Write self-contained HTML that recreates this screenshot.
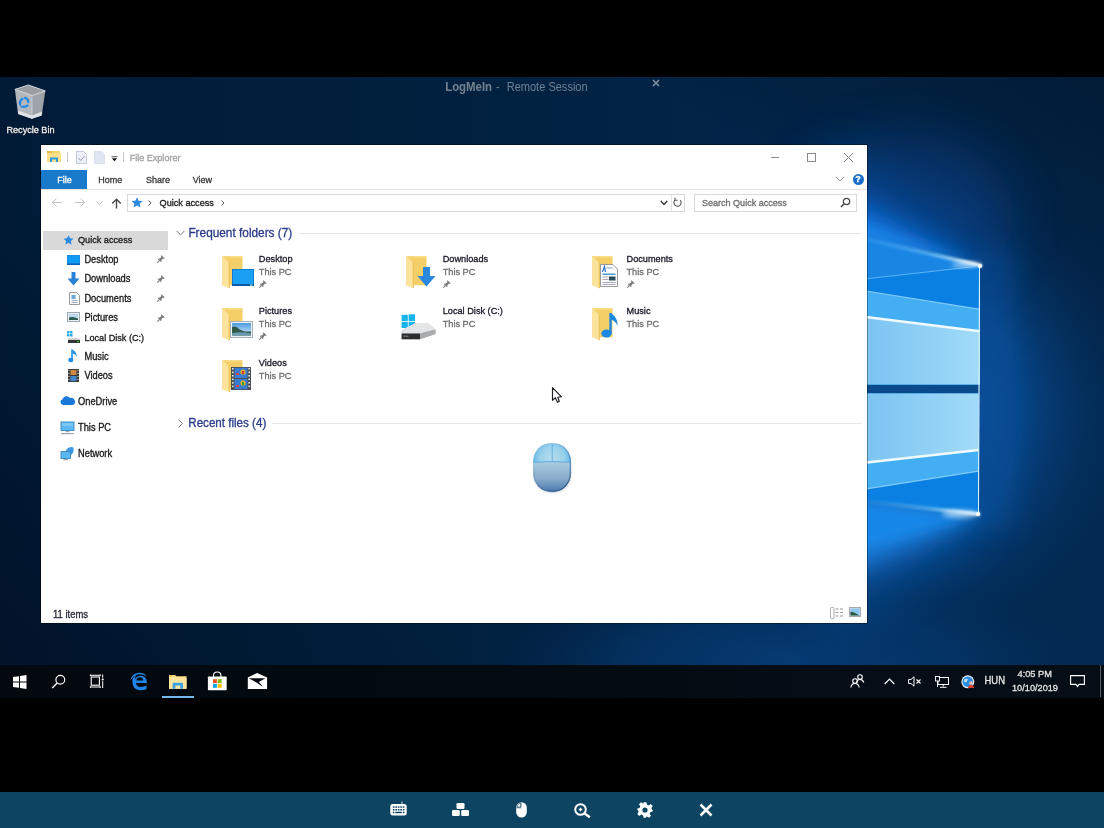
<!DOCTYPE html>
<html><head><meta charset="utf-8">
<style>
*{margin:0;padding:0;box-sizing:border-box}
html,body{width:1104px;height:828px;overflow:hidden;background:#000;font-family:"Liberation Sans",sans-serif}
.a{position:absolute;white-space:nowrap}
#desk{left:0;top:77px;width:1104px;height:588px;overflow:hidden}
#taskbar{left:0;top:665px;width:1104px;height:33px;background:linear-gradient(90deg,#03090e 0%,#030b10 45%,#050e17 80%,#050d15 100%)}
#lmi{left:0;top:792px;width:1104px;height:36px;background:#0d4461}
#win{left:41px;top:145px;width:826px;height:478px;background:#fff;overflow:hidden;box-shadow:0 0 0 1px rgba(0,0,0,0.35)}
.t{position:absolute;white-space:nowrap;line-height:1;-webkit-text-stroke:0.3px currentColor;transform:scaleY(1.08);transform-origin:0 84.65%}
</style></head><body>
<!-- DESKTOP -->
<div id="desk" class="a">
<svg width="1104" height="588" viewBox="0 77 1104 588">
<defs>
<linearGradient id="bg" x1="0" y1="0" x2="1104" y2="0" gradientUnits="userSpaceOnUse">
<stop offset="0" stop-color="#011b37"/>
<stop offset="0.4" stop-color="#01203f"/>
<stop offset="0.7" stop-color="#022549"/>
<stop offset="1" stop-color="#032a52"/>
</linearGradient>
<linearGradient id="dkBL" x1="0" y1="665" x2="250" y2="420" gradientUnits="userSpaceOnUse">
<stop offset="0" stop-color="#000814" stop-opacity="0.4"/>
<stop offset="1" stop-color="#000814" stop-opacity="0"/>
</linearGradient>
<linearGradient id="dkTR" x1="1104" y1="77" x2="940" y2="300" gradientUnits="userSpaceOnUse">
<stop offset="0" stop-color="#000814" stop-opacity="0.45"/>
<stop offset="1" stop-color="#000814" stop-opacity="0"/>
</linearGradient>
<radialGradient id="glow" cx="900" cy="400" r="1" gradientUnits="objectBoundingBox">
<stop offset="0" stop-color="#0a52a0" stop-opacity="1"/>
<stop offset="0.5" stop-color="#074384" stop-opacity="0.7"/>
<stop offset="1" stop-color="#04305e" stop-opacity="0"/>
</radialGradient>
<radialGradient id="glow2" cx="0.5" cy="0.5" r="0.5">
<stop offset="0" stop-color="#0b5cb0" stop-opacity="1"/>
<stop offset="0.55" stop-color="#084d98" stop-opacity="0.75"/>
<stop offset="1" stop-color="#04305e" stop-opacity="0"/>
</radialGradient>
<linearGradient id="beam" x1="867" y1="0" x2="982" y2="0" gradientUnits="userSpaceOnUse">
<stop offset="0" stop-color="#3aa0f0" stop-opacity="0.25"/>
<stop offset="0.55" stop-color="#7cc8f8" stop-opacity="0.55"/>
<stop offset="0.85" stop-color="#d8f0ff" stop-opacity="0.9"/>
<stop offset="1" stop-color="#ffffff" stop-opacity="1"/>
</linearGradient>
<linearGradient id="topL" x1="867" y1="0" x2="980" y2="0" gradientUnits="userSpaceOnUse">
<stop offset="0" stop-color="#7cc4f2"/>
<stop offset="1" stop-color="#a2dbf8"/>
</linearGradient>
<filter id="blur25" x="-100%" y="-100%" width="300%" height="300%"><feGaussianBlur stdDeviation="25"/></filter>
<filter id="blur12" x="-100%" y="-100%" width="300%" height="300%"><feGaussianBlur stdDeviation="12"/></filter>
<filter id="blur6" x="-50%" y="-50%" width="200%" height="200%"><feGaussianBlur stdDeviation="6"/></filter>
<filter id="blur3" x="-50%" y="-50%" width="200%" height="200%"><feGaussianBlur stdDeviation="2.5"/></filter>
<filter id="blur1" x="-10%" y="-50%" width="120%" height="200%"><feGaussianBlur stdDeviation="0.7"/></filter>
<filter id="blur15" x="-10%" y="-100%" width="120%" height="300%"><feGaussianBlur stdDeviation="1.3"/></filter>
</defs>
<rect x="0" y="77" width="1104" height="588" fill="url(#bg)"/>
<rect x="0" y="77" width="1104" height="588" fill="url(#dkBL)"/>
<rect x="0" y="77" width="1104" height="588" fill="url(#dkTR)"/>
<ellipse cx="790" cy="660" rx="300" ry="90" fill="url(#glow2)" opacity="0.4"/>
<ellipse cx="890" cy="410" rx="240" ry="250" fill="url(#glow2)"/>
<!-- glows -->
<ellipse cx="905" cy="215" rx="110" ry="80" fill="#0a4a98" opacity="0.45" filter="url(#blur25)"/>
<polygon points="830,150 982,264 830,245" fill="#0a5ec8" opacity="0.5" filter="url(#blur25)"/>
<polygon points="840,195 982,265 840,242" fill="#0c72dc" opacity="0.95" filter="url(#blur12)"/>
<polygon points="850,218 982,265 850,240" fill="#1a86ea" opacity="0.9" filter="url(#blur6)"/>
<polygon points="830,500 982,516 830,630" fill="#0f64c0" opacity="0.5" filter="url(#blur25)"/>
<polygon points="840,500 982,516 840,575" fill="#2088e8" opacity="0.85" filter="url(#blur12)"/>
<polygon points="850,500 982,516 850,550" fill="#1688ea" opacity="0.95" filter="url(#blur6)"/>
<rect x="975" y="250" width="40" height="280" fill="#0d58a8" opacity="0.35" filter="url(#blur12)"/>
<!-- dark gap -->
<rect x="860" y="384.6" width="121" height="8.8" fill="#0b4a8a"/>
<!-- top pane -->
<polygon points="860,236 980,266 860,280" fill="#1a86e4"/>
<polygon points="860,279.5 980,266 980,384.6 860,384.6" fill="#0a80e2"/>
<polygon points="860,290 980,309.3 980,384.6 860,384.6" fill="#43aff2"/>
<polygon points="860,316.3 980,331.2 980,384.6 860,384.6" fill="url(#topL)"/>
<line x1="860" y1="290" x2="980" y2="309.3" stroke="#80ccf8" stroke-width="1.2" filter="url(#blur1)"/>
<line x1="860" y1="316.3" x2="980" y2="331.2" stroke="#f0faff" stroke-width="2.4" filter="url(#blur1)"/>
<polygon points="860,235 982,264 982,267.5 860,240" fill="url(#beam)" filter="url(#blur15)"/>
<line x1="860" y1="279.5" x2="980" y2="266" stroke="#5ab4f8" stroke-width="1" filter="url(#blur1)"/>
<!-- bottom pane -->
<polygon points="860,393.4 978.5,393.4 978.5,514 860,499.5" fill="#0a80e2"/>
<polygon points="860,393.4 978.5,393.4 978.5,471.2 860,489.8" fill="#43aff2"/>
<polygon points="860,393.4 978.5,393.4 978.5,450 860,463.3" fill="url(#topL)"/>
<line x1="860" y1="489.8" x2="978.5" y2="471.2" stroke="#80ccf8" stroke-width="1.2" filter="url(#blur1)"/>
<line x1="860" y1="463.3" x2="978.5" y2="450" stroke="#f0faff" stroke-width="2.4" filter="url(#blur1)"/>
<polygon points="860,498.5 980,512.5 980,516 860,503.5" fill="url(#beam)" filter="url(#blur15)"/>
<line x1="979.6" y1="266" x2="978.4" y2="514" stroke="#d0efff" stroke-width="1.2" filter="url(#blur1)"/>
<ellipse cx="966" cy="264.5" rx="14" ry="2.5" fill="#e8f6ff" opacity="0.75" filter="url(#blur3)"/>
<ellipse cx="960" cy="514" rx="18" ry="4" fill="#d8f0ff" opacity="0.65" filter="url(#blur3)"/>
<circle cx="980" cy="266" r="2" fill="#ffffff" filter="url(#blur1)"/>
<circle cx="978" cy="514" r="2" fill="#ffffff" filter="url(#blur1)"/>
</svg>
</div>

<!-- recycle bin -->
<svg class="a" style="left:13px;top:84px" width="34" height="36" viewBox="13 84 34 36">
<path d="M14.9 89.4 L32.2 95.6 L31.9 118.8 L18.1 114 Z" fill="#bcc0c4" opacity="0.95"/>
<path d="M32.2 95.6 L45.3 90.9 L41.7 115.5 L31.9 118.8 Z" fill="#a8acb0" opacity="0.95"/>
<path d="M14.9 89.4 L28.3 85 L45.3 90.9 L32.2 95.6 Z" fill="#9a9ea2"/>
<path d="M14.9 89.4 L28.3 85 L45.3 90.9 L32.2 95.6 Z" fill="none" stroke="#e0e4e8" stroke-width="0.9"/>
<path d="M32.2 95.6 L31.9 118.8" stroke="#d8dcdf" stroke-width="0.7"/>
<path d="M18.3 110.5 L31.9 115.5 L42.2 111.5 L41.7 115.5 L31.9 118.8 L18.1 114 Z" fill="#dfe3e6"/>
<g fill="none" stroke="#1e88e5" stroke-width="2.2" stroke-linecap="round">
<path d="M20 104.5 Q19.5 100.5 22.5 98.8"/>
<path d="M25 97.8 Q28 98.8 28.3 102"/>
<path d="M27.5 105.5 Q25 107.5 21.5 106.5"/>
</g>
</svg>
<div class="t" style="left:6.5px;top:125.8px;font-size:9.1px;color:#f0f0f0;text-shadow:0 0 2px #000">Recycle Bin</div>
<!-- logmein overlay title -->
<div class="t" style="left:445.2px;top:81.6px;font-size:11.4px;font-weight:700;color:#76838f;-webkit-text-stroke:0">LogMeIn</div>
<div class="t" style="left:496px;top:81.6px;font-size:11px;color:#76838f;-webkit-text-stroke:0">-</div>
<div class="t" style="left:506.7px;top:81.6px;font-size:11.04px;color:#6f8194;-webkit-text-stroke:0">Remote Session</div>
<svg class="a" style="left:652px;top:79px" width="8" height="8" viewBox="0 0 8 8"><path d="M1 1 L7 7 M7 1 L1 7" stroke="#7f8fa0" stroke-width="1.6"/></svg>
<!-- taskbar -->
<div id="taskbar" class="a"></div>
<!-- start -->
<svg class="a" style="left:13px;top:675px" width="14" height="14" viewBox="0 0 14 14"><path d="M0 2 L6 1.2 V6.5 H0 Z M7 1 L13.5 0 V6.5 H7 Z M0 7.5 H6 V12.8 L0 12 Z M7 7.5 H13.5 V14 L7 13 Z" fill="#fff"/></svg>
<svg class="a" style="left:50px;top:672px" width="18" height="18" viewBox="50 672 18 18"><circle cx="60.3" cy="679.8" r="4.4" stroke="#fff" stroke-width="1.15" fill="none"/><path d="M57.2 683 L52.2 688" stroke="#fff" stroke-width="1.3"/></svg>
<svg class="a" style="left:88px;top:672px" width="18" height="18" viewBox="88 672 18 18"><rect x="91.2" y="677" width="8.2" height="8.2" stroke="#fff" stroke-width="1.1" fill="none"/><path d="M90 675.3 H100.6 M90 687 H100.6 M90.4 674.5 V676 M100.2 674.5 V676 M90.4 686.3 V687.8 M100.2 686.3 V687.8" stroke="#fff" stroke-width="1"/><path d="M102.7 674.5 V677.8 M102.7 681.2 V688" stroke="#fff" stroke-width="1"/><circle cx="102.7" cy="679.5" r="1.1" fill="#fff"/></svg>
<!-- edge -->
<svg class="a" style="left:129px;top:671px" width="20" height="21" viewBox="129 671 20 21"><path d="M146.9 683 H136 Q136.5 686.8 140.5 687 Q143.5 687.1 146.5 685.6 V689.2 Q143.5 690.3 140 690.2 Q132.6 689.8 132.4 682 Q132.3 676.8 136.6 674.2 Q134.6 677 134.9 679.3 Q137 675.5 141 675.7 Q147 676.2 146.9 683 Z M136.3 680.4 H143.3 Q143 677.3 139.8 677.2 Q136.9 677.3 136.3 680.4 Z" fill="#1f86e8"/><path d="M130.4 680.8 Q131.5 673.5 139 672.8 Q144.6 672.5 146.6 676.6 Q143 673.9 138.6 674.3 Q133.2 675 130.4 680.8 Z" fill="#1f86e8"/></svg>
<!-- explorer -->
<svg class="a" style="left:169px;top:673.5px" width="18" height="16" viewBox="0 0 18 16"><path d="M0 1 H6 L7.5 2.2 H17.5 V14.8 H0 Z" fill="#f8dc88"/><rect x="0" y="3.5" width="17.5" height="11.3" fill="#fde59e"/><rect x="0.3" y="1.2" width="3" height="1" fill="#e8b848"/><path d="M3.6 14.8 V10 Q3.6 8.8 4.8 8.8 H12.8 Q14 8.8 14 10 V14.8 H11.2 V11.6 H6.4 V14.8 Z" fill="#3aa2e2"/></svg>
<div class="a" style="left:162px;top:695.5px;width:32px;height:2px;background:#76b9ed"></div>
<!-- store -->
<svg class="a" style="left:206px;top:670px" width="22" height="22" viewBox="206 670 22 22"><path d="M213.5 677 V675.5 Q213.5 672 217.2 672 Q220.9 672 220.9 675.5 V677" stroke="#fff" stroke-width="1.1" fill="none"/><rect x="207.9" y="676.5" width="18.8" height="13.7" rx="0.8" fill="#fff"/><rect x="213" y="679.2" width="3.9" height="3.9" fill="#f25022"/><rect x="217.7" y="679.2" width="3.9" height="3.9" fill="#7fba00"/><rect x="213" y="683.9" width="3.9" height="3.9" fill="#00a4ef"/><rect x="217.7" y="683.9" width="3.9" height="3.9" fill="#ffb900"/></svg>
<!-- mail -->
<svg class="a" style="left:245px;top:671px" width="24" height="20" viewBox="245 671 24 20"><path d="M257.1 672.9 L267.1 677.5 V688.9 H247.8 V677.5 Z" fill="#fff"/><path d="M248.8 678.3 H265.4 L258.9 682 L262.4 686 L261.8 686.2 L257.3 683 Z" fill="#060a10"/></svg>
<!-- tray -->
<svg class="a" style="left:850px;top:674px" width="15" height="14" viewBox="0 0 15 14"><circle cx="10" cy="3" r="2.3" stroke="#fff" stroke-width="1.1" fill="none"/><path d="M6.5 9 Q7 5.5 10 5.5 Q13 5.5 13.8 8.5" stroke="#fff" stroke-width="1.1" fill="none"/><circle cx="5" cy="7" r="2.3" stroke="#fff" stroke-width="1.1" fill="none"/><path d="M0.8 13.5 Q1.5 9.5 5 9.5 Q8.5 9.5 9.2 13.5" stroke="#fff" stroke-width="1.1" fill="none"/></svg>
<svg class="a" style="left:884px;top:678px" width="11" height="7" viewBox="0 0 11 7"><path d="M0.7 6 L5.5 1 L10.3 6" stroke="#fff" stroke-width="1.2" fill="none"/></svg>
<svg class="a" style="left:908px;top:676px" width="14" height="11" viewBox="0 0 14 11"><path d="M0.6 3.5 H3 L6 0.8 V10.2 L3 7.5 H0.6 Z" stroke="#fff" stroke-width="1" fill="none"/><path d="M8.5 3.5 L12.5 7.5 M12.5 3.5 L8.5 7.5" stroke="#fff" stroke-width="1.1"/></svg>
<svg class="a" style="left:935px;top:676px" width="14" height="12" viewBox="0 0 14 12"><rect x="3" y="1.5" width="10.5" height="7" stroke="#fff" stroke-width="1" fill="none"/><path d="M8.2 8.5 V10.5 M5 11.3 H11.5" stroke="#fff" stroke-width="1"/><rect x="0.5" y="0.5" width="4" height="4.5" fill="#07101a" stroke="#fff" stroke-width="0.9"/><path d="M2.5 5 V11" stroke="#fff" stroke-width="0.9"/></svg>
<svg class="a" style="left:960.5px;top:674.5px" width="14" height="14" viewBox="0 0 14 14"><circle cx="6.8" cy="6.8" r="6.5" fill="#e8eef4"/><circle cx="6.8" cy="6.8" r="5.3" fill="#2a8ce0"/><path d="M3 5 Q5 3 7 4.5 Q6 7 3.5 7.5 Z" fill="#bfe0f8"/><circle cx="10" cy="8" r="1.8" fill="#f0c0a0"/><path d="M7 13 Q7 10 10 10 Q13 10 13 13 Z" fill="#e03a2a"/></svg>
<div class="t" style="left:984.5px;top:676.4px;font-size:9.5px;color:#e4e4e4">HUN</div>
<div class="t" style="left:1017.6px;top:669.9px;font-size:9.2px;color:#e4e4e4">4:05 PM</div>
<div class="t" style="left:1012px;top:684.4px;font-size:9.2px;color:#e4e4e4">10/10/2019</div>
<svg class="a" style="left:1070px;top:675px" width="15" height="13" viewBox="0 0 15 13"><path d="M0.6 0.6 H14.4 V9.4 H9 L7.5 11.5 L6 9.4 H0.6 Z" stroke="#fff" stroke-width="1.1" fill="none"/></svg>
<div class="a" style="left:1100px;top:665px;width:1px;height:32px;background:#5a5d62"></div>

<!-- logmein bottom toolbar -->
<div id="lmi" class="a"></div>
<svg class="a" style="left:390px;top:801px" width="17" height="15" viewBox="0 0 17 15"><path d="M12 3 V0.5" stroke="#fff" stroke-width="0.8"/><rect x="0.3" y="3" width="16.4" height="11.6" rx="2.5" fill="#fff"/><g fill="#0d4461"><rect x="2.8" y="5.3" width="1.6" height="1.5"/><rect x="5.3" y="5.3" width="1.6" height="1.5"/><rect x="7.8" y="5.3" width="1.6" height="1.5"/><rect x="10.3" y="5.3" width="1.6" height="1.5"/><rect x="12.8" y="5.3" width="1.6" height="1.5"/><rect x="2.8" y="8" width="1.6" height="1.5"/><rect x="5.3" y="8" width="1.6" height="1.5"/><rect x="7.8" y="8" width="1.6" height="1.5"/><rect x="10.3" y="8" width="1.6" height="1.5"/><rect x="12.8" y="8" width="1.6" height="1.5"/><rect x="2.8" y="10.7" width="1.6" height="1.5"/><rect x="5.3" y="10.7" width="6.5" height="1.5"/><rect x="12.8" y="10.7" width="1.6" height="1.5"/></g></svg>
<svg class="a" style="left:451.5px;top:803px" width="17" height="13" viewBox="0 0 17 13"><rect x="4.5" y="0" width="8" height="6" rx="1.3" fill="#fff"/><rect x="0" y="7" width="7.8" height="6" rx="1.3" fill="#fff"/><rect x="9.2" y="7" width="7.8" height="6" rx="1.3" fill="#fff"/></svg>
<svg class="a" style="left:516px;top:801.5px" width="11" height="16" viewBox="0 0 11 16"><rect x="0.2" y="0.2" width="10.6" height="15.4" rx="5.3" fill="#fff"/><path d="M5 0.5 V5.5 M0.5 5.8 H5" stroke="#0d4461" stroke-width="0.7"/><path d="M4.4 1 L4.4 5 L1 5 Q1.5 1.5 4.4 1 Z" fill="#fff" stroke="#0d4461" stroke-width="0.6"/></svg>
<svg class="a" style="left:574px;top:802.5px" width="17" height="15" viewBox="0 0 17 15"><circle cx="6.5" cy="6.5" r="5.3" stroke="#fff" stroke-width="2" fill="none"/><path d="M10.3 10.3 L15.8 14.3" stroke="#fff" stroke-width="2.4"/><path d="M6.5 4.8 V8.2 M4.8 6.5 H8.2" stroke="#fff" stroke-width="1.3"/></svg>
<svg class="a" style="left:636.5px;top:801.5px" width="16" height="16" viewBox="0 0 16 16"><path d="M6.6 0.3 H9.4 L9.9 2.6 L11.7 3.4 L13.7 2.1 L15.7 4.1 L14.4 6.1 L15.2 7.9 L15.7 8 V9.4 L13.5 9.9 L12.7 11.7 L14 13.7 L12 15.7 L10 14.4 L9.4 14.7 L9 15.7 H6.6 L6.1 13.4 L4.3 12.6 L2.3 13.9 L0.3 11.9 L1.6 9.9 L0.8 8.1 L0.3 7.9 V6.6 L2.5 6.1 L3.3 4.3 L2 2.3 L4 0.3 L6 1.6 L6.6 1.3 Z" fill="#fff"/><circle cx="8" cy="8" r="2.6" fill="#0d4461"/></svg>
<svg class="a" style="left:698.5px;top:802.5px" width="14" height="14" viewBox="0 0 14 14"><path d="M1.5 1.5 L12.5 12.5 M12.5 1.5 L1.5 12.5" stroke="#fff" stroke-width="2.6"/></svg>

<!-- window -->
<div id="win" class="a"></div>
<svg width="0" height="0" style="position:absolute">
<defs>
<symbol id="fold" viewBox="0 0 32 33">
<rect x="1" y="0.3" width="20.5" height="29" fill="#f4cf68"/>
<rect x="1" y="0.3" width="20.5" height="1.5" fill="#f8da80"/>
<polygon points="1,0.3 7.8,6 7.8,32.5 1,28.8" fill="#fbe39c"/>
<polygon points="7.8,6 9,6.4 9,31.8 7.8,32.5" fill="#efc65c"/>
</symbol>
<symbol id="pin" viewBox="0 0 8 8">
<path d="M4.6 0.3 L7.7 3.4 L6.9 4.0 L6.0 3.6 L4.4 5.2 L4.5 6.5 L3.8 7.1 L0.9 4.2 L1.5 3.5 L2.8 3.6 L4.4 2.0 L4.0 1.1 Z" fill="#7a7a7a"/>
<path d="M2.3 5.7 L0.3 7.7" stroke="#7a7a7a" stroke-width="1.1"/>
</symbol>
</defs>
</svg>
<!-- title bar -->
<svg class="a" style="left:46px;top:150px" width="16" height="14" viewBox="0 0 16 14">
<rect x="1" y="1" width="13" height="11" fill="#f7d26c"/>
<rect x="1" y="1" width="5" height="2" fill="#e9b949"/>
<rect x="1" y="3" width="14" height="9" fill="#fbdf8c"/>
<path d="M4 12 V7.5 H12 V12 H10 V9.5 H6 V12 Z" fill="#2d9be0"/>
</svg>
<div class="a" style="left:67px;top:152px;width:1px;height:10px;background:#c8c8c8"></div>
<svg class="a" style="left:76px;top:151px" width="11" height="14" viewBox="0 0 11 14">
<path d="M0.5 0.5 H7.5 L10.5 3.5 V12.5 H0.5 Z" fill="#eceef8" stroke="#c0c4dc" stroke-width="0.9"/>
<path d="M2.5 7 L4.8 9.5 L8.5 5" stroke="#9aa0b4" stroke-width="1" fill="none"/>
</svg>
<svg class="a" style="left:94px;top:151px" width="11" height="14" viewBox="0 0 11 14">
<path d="M0.5 0.5 H7.5 L10.5 3.5 V12.5 H0.5 Z" fill="#dfe7f3" stroke="#d4dcea" stroke-width="0.8"/>
</svg>
<svg class="a" style="left:110.5px;top:155.5px" width="7" height="6" viewBox="0 0 7 6">
<rect x="0.5" y="0.3" width="6" height="0.9" fill="#444"/>
<path d="M0.8 2.2 H6.2 L3.5 5.2 Z" fill="#111"/>
</svg>
<div class="a" style="left:123px;top:152px;width:1px;height:10px;background:#c8c8c8"></div>
<div class="t" style="left:129.7px;top:153.5px;font-size:9.05px;color:#a0a0a0">File Explorer</div>
<!-- caption buttons -->
<div class="a" style="left:771px;top:157px;width:8px;height:1px;background:#8a8a8a"></div>
<div class="a" style="left:807px;top:153px;width:9px;height:9px;border:1px solid #8a8a8a"></div>
<svg class="a" style="left:843px;top:152px" width="11" height="11" viewBox="0 0 11 11">
<path d="M1 1 L10 10 M10 1 L1 10" stroke="#8a8a8a" stroke-width="1"/>
</svg>
<!-- ribbon tabs -->
<div class="a" style="left:41px;top:170px;width:46px;height:18.5px;background:#1979ca"></div>
<div class="t" style="left:57.2px;top:175.5px;font-size:9px;color:#fff">File</div>
<div class="t" style="left:98.3px;top:175.5px;font-size:9px;color:#3a3a3a">Home</div>
<div class="t" style="left:146px;top:175.5px;font-size:9px;color:#3a3a3a">Share</div>
<div class="t" style="left:192.7px;top:175.5px;font-size:9px;color:#3a3a3a">View</div>
<svg class="a" style="left:835px;top:176px" width="10" height="6" viewBox="0 0 10 6">
<path d="M1 1 L5 5 L9 1" stroke="#9a9a9a" stroke-width="1" fill="none"/>
</svg>
<div class="a" style="left:852.5px;top:173.5px;width:11px;height:11px;border-radius:50%;background:#1a6fc8"></div>
<div class="t" style="left:855.3px;top:175px;font-size:9px;font-weight:700;color:#fff">?</div>
<div class="a" style="left:41px;top:188.5px;width:826px;height:1px;background:#e3e3e3"></div>

<!-- nav pane -->
<div class="a" style="left:42.5px;top:230.5px;width:125px;height:19px;background:#d9d9d9"></div>
<svg class="a" style="left:63px;top:234.5px" width="11" height="10" viewBox="0 0 12 11">
<path d="M6 0.3 L7.6 3.7 L11.5 4.1 L8.6 6.7 L9.4 10.6 L6 8.6 L2.6 10.6 L3.4 6.7 L0.5 4.1 L4.4 3.7 Z" fill="#2b8ae0"/>
</svg>
<div class="t" style="left:78px;top:236.3px;font-size:9.15px;color:#1a1a1a">Quick access</div>

<svg class="a" style="left:67px;top:255px" width="13" height="10" viewBox="0 0 13 10"><rect x="0" y="0" width="13" height="10" fill="#1e8de8"/><rect x="1" y="1" width="11" height="7" fill="#0f9cf5"/><rect x="0" y="8.5" width="13" height="1.5" fill="#1063b0"/></svg>
<div class="t" style="left:84.4px;top:256.1px;font-size:9.3px;color:#1a1a1a">Desktop</div>
<svg class="a" style="left:157px;top:255px" width="8" height="8"><use href="#pin"/></svg>

<svg class="a" style="left:67px;top:272px" width="13" height="14" viewBox="0 0 13 14"><path d="M4.5 0 H8.5 V6.5 H12.5 L6.5 13.5 L0.5 6.5 H4.5 Z" fill="#2a7fd8"/></svg>
<div class="t" style="left:84.4px;top:275.4px;font-size:9.3px;color:#1a1a1a">Downloads</div>
<svg class="a" style="left:157px;top:274.5px" width="8" height="8"><use href="#pin"/></svg>

<svg class="a" style="left:68.5px;top:292px" width="11" height="13" viewBox="0 0 11 13"><path d="M0.5 0.5 H7.5 L10.5 3.5 V12.5 H0.5 Z" fill="#fafafa" stroke="#9a9a9a"/><rect x="2.5" y="3" width="4" height="4" fill="#66a8d8"/><rect x="2.5" y="8" width="6" height="1" fill="#9ab"/><rect x="2.5" y="10" width="6" height="1" fill="#9ab"/></svg>
<div class="t" style="left:84.4px;top:294.7px;font-size:9.3px;color:#1a1a1a">Documents</div>
<svg class="a" style="left:157px;top:294px" width="8" height="8"><use href="#pin"/></svg>

<svg class="a" style="left:67px;top:312px" width="13" height="10" viewBox="0 0 13 10"><rect x="0.5" y="0.5" width="12" height="9" fill="#e8eef4" stroke="#a0a8b0"/><rect x="2" y="2" width="9" height="6" fill="#bcd8ee"/><path d="M2 8 L2 5.5 Q6 4 11 6.5 V8 Z" fill="#2c5a50"/></svg>
<div class="t" style="left:84.4px;top:314px;font-size:9.3px;color:#1a1a1a">Pictures</div>
<svg class="a" style="left:157px;top:313.5px" width="8" height="8"><use href="#pin"/></svg>

<svg class="a" style="left:67px;top:331px" width="13" height="12" viewBox="0 0 13 12"><rect x="0" y="0" width="2.5" height="2.5" fill="#29b0e8"/><rect x="3" y="0" width="2.5" height="2.5" fill="#29b0e8"/><rect x="0" y="3" width="2.5" height="2.5" fill="#29b0e8"/><rect x="3" y="3" width="2.5" height="2.5" fill="#29b0e8"/><path d="M1 7 H11 L13 9 V12 H1 Z" fill="#d0d0d0"/><rect x="1" y="9" width="12" height="3" fill="#333"/><rect x="10" y="10" width="2" height="1" fill="#3c3"/></svg>
<div class="t" style="left:84.4px;top:333.6px;font-size:9.12px;color:#1a1a1a">Local Disk (C:)</div>

<svg class="a" style="left:68px;top:349px" width="10" height="14" viewBox="0 0 10 14"><path d="M4 0.5 V10.5" stroke="#1e8de8" stroke-width="1.6"/><path d="M4.5 0.5 Q9 3 8.5 8 Q8 5 4.5 4.5 Z" fill="#1e8de8"/><ellipse cx="2.8" cy="11" rx="2.6" ry="2.2" fill="#1e8de8"/></svg>
<div class="t" style="left:84.4px;top:353px;font-size:9.3px;color:#1a1a1a">Music</div>

<svg class="a" style="left:68px;top:369px" width="11" height="13" viewBox="0 0 11 13"><rect x="0" y="0" width="11" height="13" fill="#3a3a3a"/><rect x="2.5" y="1" width="6" height="5" fill="#c84"/><rect x="2.5" y="7" width="6" height="5" fill="#48c"/><rect x="0.5" y="1" width="1" height="1" fill="#ddd"/><rect x="0.5" y="4" width="1" height="1" fill="#ddd"/><rect x="0.5" y="7" width="1" height="1" fill="#ddd"/><rect x="0.5" y="10" width="1" height="1" fill="#ddd"/><rect x="9.5" y="1" width="1" height="1" fill="#ddd"/><rect x="9.5" y="4" width="1" height="1" fill="#ddd"/><rect x="9.5" y="7" width="1" height="1" fill="#ddd"/><rect x="9.5" y="10" width="1" height="1" fill="#ddd"/></svg>
<div class="t" style="left:84.4px;top:372.3px;font-size:9.3px;color:#1a1a1a">Videos</div>

<svg class="a" style="left:60px;top:396px" width="15" height="9" viewBox="0 0 15 9"><path d="M3 9 A3 3 0 0 1 2.5 3.2 A4.2 4.2 0 0 1 10 2 A3.5 3.5 0 0 1 12.5 9 Z" fill="#1a78d8"/></svg>
<div class="t" style="left:78px;top:398px;font-size:9.3px;color:#1a1a1a">OneDrive</div>

<svg class="a" style="left:60px;top:421px" width="15" height="14" viewBox="0 0 15 14"><rect x="1" y="1" width="13" height="8.5" fill="#5cb8f0" stroke="#3a88c0" stroke-width="0.9"/><rect x="2" y="2" width="11" height="3" fill="#8fd0f6" opacity="0.6"/><rect x="5.5" y="10" width="4" height="1.2" fill="#9aa8b4"/><rect x="1" y="12" width="13" height="1.2" fill="#a0a4a8"/></svg>
<div class="t" style="left:78px;top:424px;font-size:9.3px;color:#1a1a1a">This PC</div>

<svg class="a" style="left:60px;top:446px" width="15" height="15" viewBox="0 0 15 15"><path d="M6 4 Q9 0 13.5 1.5 Q14.5 5 12 8.5 L8 9 Z" fill="#3a9ae4"/><rect x="1" y="5.5" width="9.5" height="7" fill="#5cb8f0" stroke="#3a88c0" stroke-width="0.9"/><rect x="3.5" y="13" width="4.5" height="1.2" fill="#9aa8b4"/></svg>
<div class="t" style="left:78px;top:450px;font-size:9.3px;color:#1a1a1a">Network</div>

<!-- content -->
<svg class="a" style="left:175.5px;top:229.5px" width="9" height="6" viewBox="0 0 9 6"><path d="M0.5 0.8 L4.5 5 L8.5 0.8" stroke="#7a7a7a" stroke-width="1" fill="none"/></svg>
<div class="t" style="left:188.4px;top:228.2px;font-size:11.84px;color:#2a3c8a">Frequent folders (7)</div>
<div class="a" style="left:297.5px;top:233px;width:564.5px;height:1px;background:#e6e6e8"></div>

<svg class="a" style="left:178px;top:418.5px" width="5" height="9" viewBox="0 0 5 9"><path d="M0.6 0.5 L4.4 4.5 L0.6 8.5" stroke="#7a7a7a" stroke-width="1" fill="none"/></svg>
<div class="t" style="left:188.3px;top:416.9px;font-size:11.6px;color:#2a3c8a">Recent files (4)</div>
<div class="a" style="left:272px;top:423px;width:590px;height:1px;background:#e6e6e8"></div>


<!-- content items -->
<!-- Desktop -->
<svg class="a" style="left:221px;top:256px" width="32" height="33"><use href="#fold"/></svg>
<svg class="a" style="left:232px;top:269px" width="22" height="18" viewBox="0 0 22 18"><rect x="0" y="0" width="22" height="16" fill="#0a74c8"/><rect x="0.8" y="0.8" width="20.4" height="14.4" fill="#1aa0f2"/><rect x="0" y="15" width="22" height="2" fill="#0b5aa8"/><rect x="18" y="15.5" width="2.5" height="1" fill="#cfe"/></svg>
<div class="t" style="left:258.8px;top:255.1px;font-size:9.2px;color:#1a1a2a">Desktop</div>
<div class="t" style="left:258.8px;top:268.1px;font-size:9.2px;color:#707070">This PC</div>
<svg class="a" style="left:259px;top:280px" width="8" height="8"><use href="#pin"/></svg>
<!-- Downloads -->
<svg class="a" style="left:405px;top:256px" width="32" height="33"><use href="#fold"/></svg>
<svg class="a" style="left:417px;top:267px" width="19" height="20" viewBox="0 0 19 20"><path d="M6 0 H13 V9 H18.5 L9.5 19.5 L0.5 9 H6 Z" fill="#2b88dc"/></svg>
<div class="t" style="left:442.7px;top:255.1px;font-size:9.2px;color:#1a1a2a">Downloads</div>
<div class="t" style="left:442.7px;top:268.1px;font-size:9.2px;color:#707070">This PC</div>
<svg class="a" style="left:443px;top:280px" width="8" height="8"><use href="#pin"/></svg>
<!-- Documents -->
<svg class="a" style="left:591px;top:256px" width="32" height="33"><use href="#fold"/></svg>
<svg class="a" style="left:600px;top:263.5px" width="18" height="23" viewBox="0 0 18 23"><path d="M0.5 0.5 H13 L17.5 5 V22.5 H0.5 Z" fill="#fbfbfb" stroke="#9a9a9a"/><path d="M2.5 8 L4.5 2.5 L5.5 8" stroke="#2a70c8" stroke-width="1.2" fill="none"/><rect x="6.5" y="3.5" width="6" height="1" fill="#8ab"/><rect x="2.5" y="9.5" width="13" height="1.5" fill="#4a9ad8"/><rect x="2.5" y="12.5" width="6" height="1" fill="#aab"/><rect x="9" y="12.5" width="6.5" height="4" fill="#2a4a5a"/><rect x="2.5" y="15" width="6" height="1" fill="#aab"/><rect x="2.5" y="18" width="13" height="1" fill="#aab"/><rect x="2.5" y="20" width="13" height="1" fill="#aab"/></svg>
<div class="t" style="left:626.5px;top:255.1px;font-size:9.2px;color:#1a1a2a">Documents</div>
<div class="t" style="left:626.5px;top:268.1px;font-size:9.2px;color:#707070">This PC</div>
<svg class="a" style="left:627px;top:280px" width="8" height="8"><use href="#pin"/></svg>
<!-- Pictures -->
<svg class="a" style="left:221px;top:308px" width="32" height="33"><use href="#fold"/></svg>
<svg class="a" style="left:229.5px;top:320.8px" width="23" height="17" viewBox="0 0 23 17"><rect x="0.5" y="0.5" width="22" height="16" fill="#eef1f4" stroke="#a8b0b8"/><defs><linearGradient id="sky" x1="0" y1="0" x2="0" y2="1"><stop offset="0" stop-color="#4a9ae0"/><stop offset="1" stop-color="#d8ecf8"/></linearGradient></defs><rect x="2" y="2" width="19" height="12.5" fill="url(#sky)"/><path d="M2 14.5 V6 Q6 4.5 9 8 Q13 11 21 10.5 V14.5 Z" fill="#2e5a4a"/><path d="M2 14.5 V12 Q12 10.5 21 12.5 V14.5 Z" fill="#6a9ab0"/></svg>
<div class="t" style="left:258.8px;top:306.8px;font-size:9.2px;color:#1a1a2a">Pictures</div>
<div class="t" style="left:258.8px;top:319.8px;font-size:9.2px;color:#707070">This PC</div>
<svg class="a" style="left:259px;top:331.5px" width="8" height="8"><use href="#pin"/></svg>
<!-- Local Disk -->
<svg class="a" style="left:400px;top:313px" width="37" height="28" viewBox="400 313 37 28"><g fill="#1ab4ec"><rect x="401.6" y="314.8" width="6.2" height="6.2"/><rect x="408.6" y="314.3" width="6.4" height="6.7"/><rect x="401.6" y="321.8" width="6.2" height="6.2"/><rect x="408.6" y="321.8" width="6.4" height="6.4"/></g><path d="M403 329.5 L415.5 323 H428 L435.5 329.5 V334 L420 339.3 H401.6 V331 Z" fill="#c9cbcd"/><path d="M403 329.5 L415.5 323 H428 L435.5 329.5 L420 333.5 H401.6 Z" fill="#e4e5e6"/><path d="M401.6 333.5 H420 V339.3 H401.6 Z" fill="#2e2e30"/><path d="M420 333.5 L435.5 329.5 V334 L420 339.3 Z" fill="#a9abad"/><rect x="403.5" y="335.6" width="5" height="1.2" fill="#777"/></svg>
<div class="t" style="left:442.7px;top:306.8px;font-size:9.2px;color:#1a1a2a">Local Disk (C:)</div>
<div class="t" style="left:442.7px;top:319.8px;font-size:9.2px;color:#707070">This PC</div>
<!-- Music -->
<svg class="a" style="left:591px;top:308px" width="32" height="33"><use href="#fold"/></svg>
<svg class="a" style="left:601px;top:312px" width="18" height="26" viewBox="0 0 18 26"><path d="M9.5 1 V21" stroke="#1a88e0" stroke-width="2.4"/><path d="M10 1 Q17 6 16.5 14 Q15 9 10 7.5 Z" fill="#1a88e0"/><ellipse cx="5.5" cy="21.5" rx="5.2" ry="4" fill="#1a88e0"/></svg>
<div class="t" style="left:626.5px;top:306.8px;font-size:9.2px;color:#1a1a2a">Music</div>
<div class="t" style="left:626.5px;top:319.8px;font-size:9.2px;color:#707070">This PC</div>
<!-- Videos -->
<svg class="a" style="left:221px;top:360px" width="32" height="33"><use href="#fold"/></svg>
<svg class="a" style="left:231px;top:367px" width="20" height="23" viewBox="0 0 20 23"><rect x="0" y="0" width="20" height="23" fill="#4a4e52"/><rect x="3.5" y="0.8" width="13" height="10.2" fill="#3a7cd0"/><rect x="3.5" y="12" width="13" height="10.2" fill="#3a7cd0"/><circle cx="12" cy="5" r="2.6" fill="#e8b020"/><rect x="11" y="4" width="2" height="3" fill="#d03030"/><rect x="5" y="6" width="3" height="2" fill="#e04040"/><circle cx="12" cy="16" r="2.6" fill="#e8b020"/><rect x="11" y="15" width="2" height="3" fill="#30a040"/><rect x="5" y="18" width="3" height="2" fill="#e04040"/><g fill="#e8e8e8"><rect x="1" y="1" width="1.6" height="1.6"/><rect x="1" y="4.5" width="1.6" height="1.6"/><rect x="1" y="8" width="1.6" height="1.6"/><rect x="1" y="11.5" width="1.6" height="1.6"/><rect x="1" y="15" width="1.6" height="1.6"/><rect x="1" y="18.5" width="1.6" height="1.6"/><rect x="17.4" y="1" width="1.6" height="1.6"/><rect x="17.4" y="4.5" width="1.6" height="1.6"/><rect x="17.4" y="8" width="1.6" height="1.6"/><rect x="17.4" y="11.5" width="1.6" height="1.6"/><rect x="17.4" y="15" width="1.6" height="1.6"/><rect x="17.4" y="18.5" width="1.6" height="1.6"/></g></svg>
<div class="t" style="left:258.8px;top:358.6px;font-size:9.2px;color:#1a1a2a">Videos</div>
<div class="t" style="left:258.8px;top:371.6px;font-size:9.2px;color:#707070">This PC</div>
<!-- status bar view icons -->
<svg class="a" style="left:830px;top:607px" width="14" height="12" viewBox="0 0 14 12"><rect x="0.5" y="0.5" width="3.5" height="11" rx="0.8" fill="none" stroke="#9a9a9a" stroke-width="0.8"/><g fill="#9a9a9a"><rect x="5.5" y="1.5" width="3" height="1"/><rect x="10" y="1.5" width="3" height="1"/><rect x="5.5" y="5" width="3" height="1"/><rect x="10" y="5" width="3" height="1"/><rect x="5.5" y="8.5" width="3" height="1"/><rect x="10" y="8.5" width="3" height="1"/></g></svg>
<svg class="a" style="left:849px;top:607px" width="12" height="10" viewBox="0 0 12 10"><rect x="0.5" y="0.5" width="11" height="9" fill="#dde" stroke="#aaa"/><rect x="1.5" y="1.5" width="9" height="7" fill="#8ac8f0"/><path d="M1.5 8.5 V4.5 Q5 5 10.5 8.5 Z" fill="#2a5a3a"/></svg>
<div class="t" style="left:53px;top:609.5px;font-size:9.45px;color:#2a2a3a">11 items</div>
<!-- nav arrows -->
<svg class="a" style="left:51px;top:197px" width="12" height="11" viewBox="0 0 12 11">
<path d="M11 5.5 H1.5 M5.5 1.5 L1.5 5.5 L5.5 9.5" stroke="#c6c6c6" stroke-width="1" fill="none"/>
</svg>
<svg class="a" style="left:74px;top:197px" width="12" height="11" viewBox="0 0 12 11">
<path d="M1 5.5 H10.5 M6.5 1.5 L10.5 5.5 L6.5 9.5" stroke="#c6c6c6" stroke-width="1" fill="none"/>
</svg>
<svg class="a" style="left:96px;top:201px" width="7" height="4" viewBox="0 0 7 4">
<path d="M0.5 0.5 L3.5 3.5 L6.5 0.5" stroke="#c6c6c6" stroke-width="1" fill="none"/>
</svg>
<svg class="a" style="left:111px;top:198px" width="11" height="11" viewBox="0 0 11 11"><path d="M5.5 10.5 V1.2 M1.2 5.5 L5.5 1.2 L9.8 5.5" stroke="#4a4a4a" stroke-width="1.4" fill="none"/></svg>
<!-- address box -->
<div class="a" style="left:127px;top:194px;width:558px;height:18px;border:1px solid #d9d9d9"></div>
<svg class="a" style="left:131px;top:197px" width="12" height="11" viewBox="0 0 12 11">
<path d="M6 0.3 L7.6 3.7 L11.5 4.1 L8.6 6.7 L9.4 10.6 L6 8.6 L2.6 10.6 L3.4 6.7 L0.5 4.1 L4.4 3.7 Z" fill="#2b8ae0"/>
</svg>
<svg class="a" style="left:148px;top:200px" width="4" height="6" viewBox="0 0 4 6"><path d="M0.5 0.5 L3 3 L0.5 5.5" stroke="#555" fill="none"/></svg>
<div class="t" style="left:159.6px;top:199px;font-size:9.15px;color:#1a1a1a">Quick access</div>
<svg class="a" style="left:221px;top:200px" width="4" height="6" viewBox="0 0 4 6"><path d="M0.5 0.5 L3 3 L0.5 5.5" stroke="#555" fill="none"/></svg>
<svg class="a" style="left:660px;top:200px" width="8" height="6" viewBox="0 0 8 6"><path d="M0.8 1 L4 4.5 L7.2 1" stroke="#333" stroke-width="1.3" fill="none"/></svg>
<div class="a" style="left:670.5px;top:195px;width:1px;height:16px;background:#e5e5e5"></div>
<svg class="a" style="left:672px;top:197px" width="11" height="11" viewBox="0 0 11 11"><path d="M8.2 3.2 A3.6 3.6 0 1 1 3.3 2.8 M3 0.8 V3.3 H5.5" stroke="#555" stroke-width="1.1" fill="none"/></svg>
<!-- search box -->
<div class="a" style="left:694px;top:194px;width:163px;height:18px;border:1px solid #d9d9d9"></div>
<div class="t" style="left:701.9px;top:199px;font-size:9.05px;color:#6d6d6d">Search Quick access</div>
<svg class="a" style="left:840px;top:197px" width="11" height="11" viewBox="0 0 11 11"><circle cx="6.5" cy="4.5" r="3.2" stroke="#444" stroke-width="1.2" fill="none"/><path d="M4.2 6.8 L1 10" stroke="#444" stroke-width="1.5"/></svg>


<!-- mouse overlay -->
<svg class="a" style="left:526px;top:438px" width="52" height="60" viewBox="526 438 52 60">
<defs>
<radialGradient id="mtop" cx="552" cy="458" r="20" gradientUnits="userSpaceOnUse"><stop offset="0" stop-color="#b6ddef"/><stop offset="0.6" stop-color="#98d0ec"/><stop offset="1" stop-color="#62b6e4"/></radialGradient>
<linearGradient id="mbot" x1="0" y1="462" x2="0" y2="492" gradientUnits="userSpaceOnUse"><stop offset="0" stop-color="#a8cce0"/><stop offset="0.55" stop-color="#88acca"/><stop offset="1" stop-color="#4a78ae"/></linearGradient>
<linearGradient id="mrim" x1="533" y1="450" x2="571" y2="492" gradientUnits="userSpaceOnUse"><stop offset="0" stop-color="#5aa8dc" stop-opacity="0"/><stop offset="0.5" stop-color="#3a70a8" stop-opacity="0.5"/><stop offset="1" stop-color="#1e4478" stop-opacity="1"/></linearGradient>
<clipPath id="mclip"><rect x="533.2" y="443.4" width="37.7" height="48.3" rx="17" ry="18.5"/></clipPath>
<filter id="msh" x="-30%" y="-30%" width="160%" height="160%"><feGaussianBlur stdDeviation="1.2"/></filter>
</defs>
<rect x="533.7" y="445" width="37.7" height="48" rx="17" ry="18.5" fill="#000" opacity="0.15" filter="url(#msh)"/>
<g clip-path="url(#mclip)">
<rect x="533" y="443" width="38" height="49" fill="url(#mbot)"/>
<path d="M533 443 H571 V462.3 Q552 460.8 533 462.3 Z" fill="url(#mtop)"/>
<rect x="533.2" y="443.4" width="37.7" height="48.3" rx="17" ry="18.5" fill="none" stroke="url(#mrim)" stroke-width="2.4"/>
<path d="M533 462.3 Q552 460.8 571 462.3" stroke="#5aa6da" stroke-width="0.9" fill="none"/>
<path d="M552.2 443.4 V461.2" stroke="#62acdc" stroke-width="0.9" fill="none"/>
</g>
</svg>
<!-- cursor -->
<svg class="a" style="left:550px;top:385px" width="14" height="20" viewBox="550 385 14 20">
<path d="M552.5 387.6 L552.5 400.3 L555.3 397.7 L557.5 402.3 L559.3 401.5 L557.8 397.2 L561.5 396.8 Z" fill="#fff" stroke="#1e1e24" stroke-width="1.15" stroke-linejoin="round"/>
</svg>
</body></html>
